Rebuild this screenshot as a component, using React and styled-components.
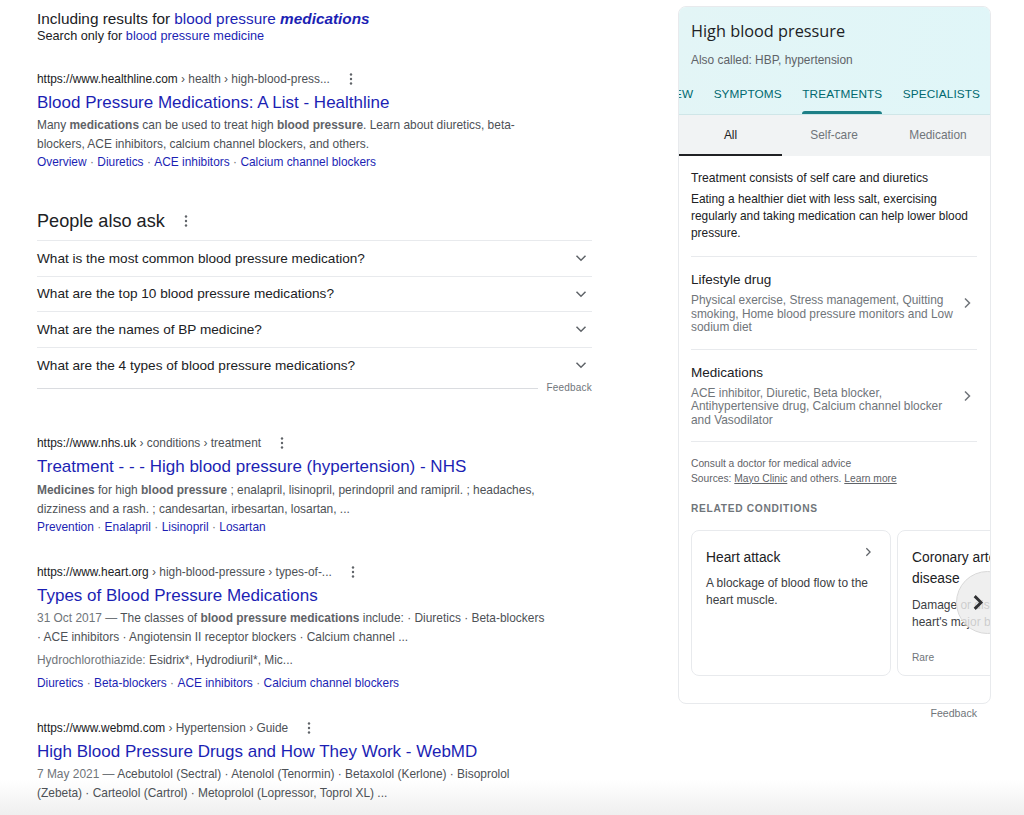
import React from 'react'
import styled, { createGlobalStyle } from 'styled-components'

const blue = '#1c1fb4'
const grey = '#4d5156'
const dark = '#202124'

const GlobalStyle = createGlobalStyle`
  html, body {
    margin: 0;
    padding: 0;
    background: #fff;
    font-family: "Liberation Sans", Arial, sans-serif;
    overflow: hidden;
  }
`

const Page = styled.div`
  width: 1024px;
  height: 815px;
  overflow: hidden;
  display: flex;
  align-items: flex-start;
  padding-left: 37px;
  box-sizing: border-box;
  background: linear-gradient(to bottom, #fff 780px, #efefef 815px);
`

const Results = styled.main`
  width: 555px;
  flex-shrink: 0;
  padding-top: 9px;
`

const Including = styled.div`
  font-size: 15.35px;
  line-height: 19px;
  color: ${dark};
`

const SearchOnly = styled.div`
  font-size: 12.7px;
  line-height: 17px;
  color: ${dark};
`

const Blue = styled.span`
  color: ${blue};
  font-weight: ${p => (p.$strong ? 700 : 400)};
  font-style: ${p => (p.$strong ? 'italic' : 'normal')};
`

const Result = styled.article`
  margin-top: ${p => p.$top}px;
  width: 515px;
`

const UrlRow = styled.div`
  display: flex;
  align-items: center;
  height: 16px;
  font-size: 11.9px;
  color: ${grey};
  white-space: nowrap;
`

const Host = styled.span`
  color: ${dark};
`

const Dots = styled.svg`
  width: 4px;
  height: 12px;
  margin-left: ${p => p.$left || 19}px;
  fill: ${p => p.$color || '#5f6368'};
`

const Title = styled.h3`
  margin: 4px 0 0;
  font-size: 17px;
  line-height: 23px;
  font-weight: 400;
  color: ${blue};
  white-space: nowrap;
`

const Snippet = styled.p`
  margin: ${p => p.$top ?? 2}px 0 0;
  font-size: 11.93px;
  line-height: 19px;
  color: ${grey};
  white-space: nowrap;

  b {
    font-weight: 700;
    color: #5f6368;
  }
`

const Muted = styled.span`
  color: #70757a;
`

const Links = styled.div`
  margin-top: ${p => p.$top ?? 0}px;
  font-size: 11.9px;
  line-height: 17px;
  color: ${blue};
  white-space: nowrap;
`

const Sep = styled.span`
  color: #70757a;
  margin: 0 3.4px;
`

const AskHeading = styled.div`
  display: flex;
  align-items: center;
  margin-top: 37px;
  height: 26px;
  font-size: 18.1px;
  color: ${dark};
`

const AskList = styled.div`
  margin-top: 6px;
  padding-bottom: 6px;
  border-bottom: 1px solid #dadce0;
`

const AskRow = styled.div`
  display: flex;
  align-items: center;
  justify-content: space-between;
  height: 34.6px;
  border-top: 1px solid #e8eaed;
  font-size: 13.6px;
  color: ${dark};
  padding-right: 5px;
`

const Chevron = styled.svg`
  width: ${p => p.$size || 12}px;
  height: ${p => p.$size || 12}px;
  fill: none;
  stroke: ${p => p.$color || '#5f6368'};
  stroke-width: ${p => p.$weight || 1.5};
  flex-shrink: 0;
`

const AskFeedback = styled.div`
  margin-top: -7px;
  text-align: right;
  font-size: 10px;
  line-height: 12px;
  color: #70757a;
`

const AskFeedbackText = styled.span`
  background: #fff;
  padding-left: 8px;
  letter-spacing: 0.2px;
`

const Side = styled.aside`
  width: 313px;
  margin-left: 86px;
  margin-top: 6px;
  flex-shrink: 0;
`

const Panel = styled.div`
  box-sizing: border-box;
  width: 313px;
  height: 698px;
  border: 1px solid #e8eaed;
  border-radius: 8px;
  overflow: hidden;
`

const PanelHead = styled.header`
  height: 108px;
  box-sizing: border-box;
  background: linear-gradient(100deg, #e3f5f6, #e0f6f8);
  border-bottom: 1px solid #cfe6e8;
  padding-top: 13px;
  display: flex;
  flex-direction: column;
`

const Condition = styled.h2`
  margin: 0 0 0 12px;
  font-family: "Open Sans", "Liberation Sans", sans-serif;
  font-size: 16.3px;
  line-height: 22px;
  font-weight: 400;
  color: ${dark};
`

const AlsoCalled = styled.div`
  margin: 10px 0 0 12px;
  font-size: 11.9px;
  line-height: 17px;
  color: #5f6368;
`

const TabRow = styled.nav`
  display: flex;
  justify-content: flex-end;
  gap: 20.5px;
  margin-top: 17px;
  padding-right: 10px;
  overflow: hidden;
  flex: 1;
`

const Tab = styled.div`
  position: relative;
  flex-shrink: 0;
  font-size: 11.8px;
  line-height: 16px;
  letter-spacing: 0.1px;
  color: #00696f;

  &::after {
    content: '';
    display: ${p => (p.$active ? 'block' : 'none')};
    position: absolute;
    left: 0;
    right: 0;
    bottom: 0;
    height: 3px;
    border-radius: 3px 3px 0 0;
    background: #1d7f86;
  }
`

const SubTabs = styled.div`
  display: grid;
  grid-template-columns: 103px 104px 104px;
  height: 41px;
  background: #f1f3f4;
`

const SubTab = styled.div`
  display: flex;
  align-items: center;
  justify-content: center;
  font-size: 11.9px;
  color: ${p => (p.$active ? dark : '#70757a')};
  border-bottom: 2px solid ${p => (p.$active ? '#202124' : 'transparent')};
  box-sizing: border-box;
`

const Body = styled.div`
  padding: 14px 13px 0 12px;
`

const Lead = styled.div`
  font-size: 12.15px;
  line-height: 17px;
  color: ${dark};
`

const Paragraph = styled.p`
  margin: 4px 0 0;
  font-size: 11.9px;
  line-height: 17px;
  color: ${dark};
`

const Divider = styled.div`
  height: 1px;
  background: #e8eaed;
  margin-top: ${p => p.$top || 13}px;
`

const TreatRow = styled.div`
  display: flex;
  align-items: center;
  justify-content: space-between;
  padding: 14px 4px 0 0;
`

const TreatName = styled.div`
  font-size: 13.5px;
  line-height: 18px;
  color: ${dark};
`

const TreatDesc = styled.div`
  width: 266px;
  margin-top: 5px;
  font-size: 11.9px;
  line-height: 13.6px;
  color: #70757a;
`

const Notes = styled.div`
  margin-top: 14px;
  font-size: 10.25px;
  line-height: 15px;
  color: #5f6368;

  u {
    text-underline-offset: 1px;
  }
`

const SectionLabel = styled.div`
  margin-top: 16px;
  font-size: 10.2px;
  line-height: 14px;
  font-weight: 700;
  letter-spacing: 0.7px;
  color: #70757a;
`

const Carousel = styled.div`
  position: relative;
  display: flex;
  gap: 6px;
  margin: 14px -13px 0 0;
  overflow: hidden;
`

const ConditionCard = styled.div`
  position: relative;
  box-sizing: border-box;
  width: 200px;
  height: 146px;
  flex-shrink: 0;
  padding: 16px 14px 0;
  border: 1px solid #e8eaed;
  border-radius: 8px;
  white-space: nowrap;
`

const CardTitle = styled.div`
  font-size: 13.8px;
  line-height: 21.5px;
  color: ${dark};
`

const CardText = styled.div`
  margin-top: 7px;
  font-size: 11.95px;
  line-height: 17px;
  color: #3c4043;
`

const CardChevron = styled.span`
  position: absolute;
  top: 16px;
  right: 17px;
  line-height: 0;
`

const Rarity = styled.div`
  position: absolute;
  left: 14px;
  bottom: 12px;
  font-size: 10.2px;
  color: #70757a;
`

const NextButton = styled.div`
  position: absolute;
  top: 41px;
  left: 265px;
  width: 63px;
  height: 63px;
  border-radius: 50%;
  border: 1px solid #d8d8d8;
  box-sizing: border-box;
  background: rgba(235, 235, 235, 0.82);
  display: flex;
  align-items: center;
  padding-left: 12px;
`

const PanelFeedback = styled.div`
  margin-top: 3px;
  padding-right: 14px;
  text-align: right;
  font-size: 10.6px;
  line-height: 13px;
  color: #70757a;
`

const DotsIcon = props => (
  <Dots viewBox="0 0 4 12" {...props}>
    <circle cx="2" cy="1.5" r="1.2" />
    <circle cx="2" cy="6" r="1.2" />
    <circle cx="2" cy="10.5" r="1.2" />
  </Dots>
)

const Down = () => (
  <Chevron viewBox="0 0 12 12">
    <path d="M1.5 3.8 6 8.2l4.5-4.4" />
  </Chevron>
)

const Right = ({ size = 12, color, weight }) => (
  <Chevron viewBox="0 0 12 12" $size={size} $color={color} $weight={weight}>
    <path d="M4 1.5 8.5 6 4 10.5" />
  </Chevron>
)

const LinkList = ({ items, top }) => (
  <Links $top={top}>
    {items.map((item, i) => (
      <React.Fragment key={item}>
        {i > 0 && <Sep>·</Sep>}
        {item}
      </React.Fragment>
    ))}
  </Links>
)

const questions = [
  'What is the most common blood pressure medication?',
  'What are the top 10 blood pressure medications?',
  'What are the names of BP medicine?',
  'What are the 4 types of blood pressure medications?',
]

const App = () => (
  <Page>
    <GlobalStyle />
    <Results>
      <Including>
        Including results for <Blue>blood pressure</Blue> <Blue $strong>medications</Blue>
      </Including>
      <SearchOnly>
        Search only for <Blue>blood pressure medicine</Blue>
      </SearchOnly>

      <Result $top={26}>
        <UrlRow>
          <Host>https://www.healthline.com</Host>&nbsp;› health › high-blood-press...
          <DotsIcon />
        </UrlRow>
        <Title>Blood Pressure Medications: A List - Healthline</Title>
        <Snippet>
          Many <b>medications</b> can be used to treat high <b>blood pressure</b>. Learn about diuretics, beta-
          <br />
          blockers, ACE inhibitors, calcium channel blockers, and others.
        </Snippet>
        <LinkList items={['Overview', 'Diuretics', 'ACE inhibitors', 'Calcium channel blockers']} />
      </Result>

      <AskHeading>
        People also ask
        <DotsIcon />
      </AskHeading>
      <AskList>
        {questions.map(q => (
          <AskRow key={q}>
            {q}
            <Down />
          </AskRow>
        ))}
      </AskList>
      <AskFeedback>
        <AskFeedbackText>Feedback</AskFeedbackText>
      </AskFeedback>

      <Result $top={41}>
        <UrlRow>
          <Host>https://www.nhs.uk</Host>&nbsp;› conditions › treatment
          <DotsIcon />
        </UrlRow>
        <Title>Treatment - - - High blood pressure (hypertension) - NHS</Title>
        <Snippet $top={3}>
          <b>Medicines</b> for high <b>blood pressure</b> ; enalapril, lisinopril, perindopril and ramipril. ; headaches,
          <br />
          dizziness and a rash. ; candesartan, irbesartan, losartan, ...
        </Snippet>
        <LinkList items={['Prevention', 'Enalapril', 'Lisinopril', 'Losartan']} />
      </Result>

      <Result $top={28}>
        <UrlRow>
          <Host>https://www.heart.org</Host>&nbsp;› high-blood-pressure › types-of-...
          <DotsIcon />
        </UrlRow>
        <Title>Types of Blood Pressure Medications</Title>
        <Snippet>
          <Muted>31 Oct 2017 — </Muted>The classes of <b>blood pressure medications</b> include: · Diuretics · Beta-blockers
          <br />· ACE inhibitors · Angiotensin II receptor blockers · Calcium channel ...
        </Snippet>
        <Snippet $top={4}>
          <Muted>Hydrochlorothiazide: </Muted>Esidrix*, Hydrodiuril*, Mic...
        </Snippet>
        <LinkList top={5} items={['Diuretics', 'Beta-blockers', 'ACE inhibitors', 'Calcium channel blockers']} />
      </Result>

      <Result $top={28}>
        <UrlRow>
          <Host>https://www.webmd.com</Host>&nbsp;› Hypertension › Guide
          <DotsIcon />
        </UrlRow>
        <Title>High Blood Pressure Drugs and How They Work - WebMD</Title>
        <Snippet>
          <Muted>7 May 2021 — </Muted>Acebutolol (Sectral) · Atenolol (Tenormin) · Betaxolol (Kerlone) · Bisoprolol
          <br />
          (Zebeta) · Carteolol (Cartrol) · Metoprolol (Lopressor, Toprol XL) ...
        </Snippet>
      </Result>
    </Results>

    <Side>
      <Panel>
        <PanelHead>
          <Condition>High blood pressure</Condition>
          <AlsoCalled>Also called: HBP, hypertension</AlsoCalled>
          <TabRow>
            <Tab>OVERVIEW</Tab>
            <Tab>SYMPTOMS</Tab>
            <Tab $active>TREATMENTS</Tab>
            <Tab>SPECIALISTS</Tab>
          </TabRow>
        </PanelHead>
        <SubTabs>
          <SubTab $active>All</SubTab>
          <SubTab>Self-care</SubTab>
          <SubTab>Medication</SubTab>
        </SubTabs>
        <Body>
          <Lead>Treatment consists of self care and diuretics</Lead>
          <Paragraph>
            Eating a healthier diet with less salt, exercising regularly and taking medication can help lower blood
            pressure.
          </Paragraph>
          <Divider $top={14} />
          <TreatRow>
            <div>
              <TreatName>Lifestyle drug</TreatName>
              <TreatDesc>
                Physical exercise, Stress management, Quitting smoking, Home blood pressure monitors and Low sodium diet
              </TreatDesc>
            </div>
            <Right size={12} color="#70757a" />
          </TreatRow>
          <Divider $top={14} />
          <TreatRow>
            <div>
              <TreatName>Medications</TreatName>
              <TreatDesc>
                ACE inhibitor, Diuretic, Beta blocker, Antihypertensive drug, Calcium channel blocker and Vasodilator
              </TreatDesc>
            </div>
            <Right size={12} color="#70757a" />
          </TreatRow>
          <Divider $top={13} />
          <Notes>
            Consult a doctor for medical advice
            <br />
            Sources: <u>Mayo Clinic</u> and others. <u>Learn more</u>
          </Notes>
          <SectionLabel>RELATED CONDITIONS</SectionLabel>
          <Carousel>
            <ConditionCard>
              <CardTitle>Heart attack</CardTitle>
              <CardText>
                A blockage of blood flow to the
                <br />
                heart muscle.
              </CardText>
              <CardChevron>
                <Right size={10} color="#5f6368" />
              </CardChevron>
            </ConditionCard>
            <ConditionCard>
              <CardTitle>
                Coronary artery
                <br />
                disease
              </CardTitle>
              <CardText>
                Damage or disease in the
                <br />
                heart's major blood vessels
              </CardText>
              <Rarity>Rare</Rarity>
            </ConditionCard>
            <NextButton>
              <Right size={17} color="#303134" weight={2} />
            </NextButton>
          </Carousel>
        </Body>
      </Panel>
      <PanelFeedback>Feedback</PanelFeedback>
    </Side>
  </Page>
)

export default App
